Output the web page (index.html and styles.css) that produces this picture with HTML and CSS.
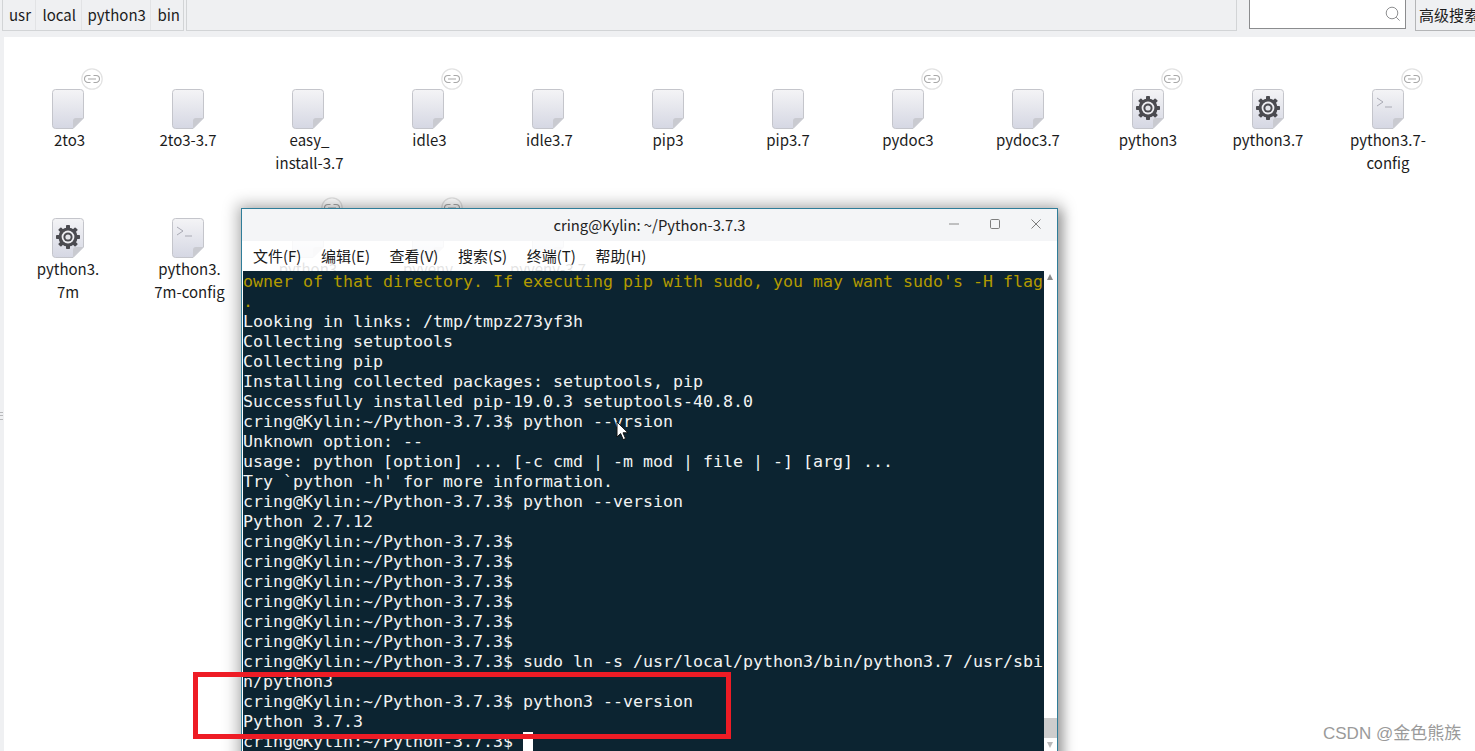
FILE: index.html
```html
<!DOCTYPE html>
<html lang="zh">
<head>
<meta charset="utf-8">
<title>Python-3.7.3</title>
<link rel="stylesheet" href="styles.css">
</head>
<body>
<svg class="defs" width="0" height="0" aria-hidden="true">
  <defs>
    <linearGradient id="paper" x1="0" y1="0" x2="0" y2="1">
      <stop offset="0" stop-color="#f4f4f6"/>
      <stop offset="1" stop-color="#d5d7e3"/>
    </linearGradient>
    <symbol id="file" viewBox="0 0 32 40">
      <path d="M3.5.5h25a3 3 0 0 1 3 3V29L21 39.5H3.5a3 3 0 0 1-3-3v-33a3 3 0 0 1 3-3z" fill="url(#paper)" stroke="#c4c5cb"/>
      <path d="M31.5 29H24a3 3 0 0 0-3 3v7.5z" fill="#c9cad0"/>
    </symbol>
    <symbol id="gear" viewBox="0 0 24 24">
      <g fill="#4b4b50">
        <rect x="10" y="0" width="4" height="24" rx=".8"/>
        <rect x="10" y="0" width="4" height="24" rx=".8" transform="rotate(45 12 12)"/>
        <rect x="10" y="0" width="4" height="24" rx=".8" transform="rotate(90 12 12)"/>
        <rect x="10" y="0" width="4" height="24" rx=".8" transform="rotate(135 12 12)"/>
        <circle cx="12" cy="12" r="9.6"/>
      </g>
      <circle cx="12" cy="12" r="6.4" fill="#eeeef2"/>
      <circle cx="12" cy="12" r="4.6" fill="#4b4b50"/>
      <circle cx="12" cy="12" r="2.6" fill="#e4e5ea"/>
    </symbol>
    <symbol id="prompt" viewBox="0 0 32 40">
      <path d="M5 9l6 4-6 4M13 18h7" fill="none" stroke="#a9aab4" stroke-width="1"/>
    </symbol>
    <symbol id="link" viewBox="0 0 22 22">
      <circle cx="11" cy="11" r="10.2" fill="#fff" stroke="#e2e2e2" stroke-width="1.2"/>
      <path d="M9.5 7.5H7a3.5 3.5 0 0 0 0 7h2.5M12.5 7.5H15a3.5 3.5 0 0 1 0 7h-2.5M7 11h8" fill="none" stroke="#a8a8a8" stroke-width="1.1"/>
    </symbol>
  </defs>
</svg>

<div class="app">
  <header class="toolbar">
    <nav class="crumbs">
      <span class="crumb">usr</span>
      <span class="crumb">local</span>
      <span class="crumb">python3</span>
      <span class="crumb">bin</span>
    </nav>
    <div class="pathfill"></div>
    <div class="search">
      <svg class="search-icon" viewBox="0 0 16 16"><circle cx="7" cy="7" r="5.8" fill="none" stroke="#8f9092" stroke-width="1"/><path d="M11.2 11.2L14.6 14.6" stroke="#8f9092" stroke-width="1"/></svg>
    </div>
    <div class="adv">高级搜索</div>
  </header>

  <main class="main">
    <span class="grip"></span>
    <section class="files">
      <div class="item"><span class="icon"><svg class="page"><use href="#file"/></svg><svg class="badge"><use href="#link"/></svg></span><span class="label nudge">2to3</span></div>
      <div class="item"><span class="icon"><svg class="page"><use href="#file"/></svg></span><span class="label">2to3-3.7</span></div>
      <div class="item"><span class="icon"><svg class="page"><use href="#file"/></svg></span><span class="label nudge">easy_<br>install-3.7</span></div>
      <div class="item"><span class="icon"><svg class="page"><use href="#file"/></svg><svg class="badge"><use href="#link"/></svg></span><span class="label nudge">idle3</span></div>
      <div class="item"><span class="icon"><svg class="page"><use href="#file"/></svg></span><span class="label nudge">idle3.7</span></div>
      <div class="item"><span class="icon"><svg class="page"><use href="#file"/></svg></span><span class="label">pip3</span></div>
      <div class="item"><span class="icon"><svg class="page"><use href="#file"/></svg></span><span class="label">pip3.7</span></div>
      <div class="item"><span class="icon"><svg class="page"><use href="#file"/></svg><svg class="badge"><use href="#link"/></svg></span><span class="label">pydoc3</span></div>
      <div class="item"><span class="icon"><svg class="page"><use href="#file"/></svg></span><span class="label">pydoc3.7</span></div>
      <div class="item"><span class="icon"><svg class="page"><use href="#file"/></svg><svg class="glyph"><use href="#gear"/></svg><svg class="badge"><use href="#link"/></svg></span><span class="label">python3</span></div>
      <div class="item"><span class="icon"><svg class="page"><use href="#file"/></svg><svg class="glyph"><use href="#gear"/></svg></span><span class="label">python3.7</span></div>
      <div class="item"><span class="icon"><svg class="page"><use href="#file"/></svg><svg class="page over"><use href="#prompt"/></svg><svg class="badge"><use href="#link"/></svg></span><span class="label">python3.7-<br>config</span></div>
      <div class="item"><span class="icon"><svg class="page"><use href="#file"/></svg><svg class="glyph"><use href="#gear"/></svg></span><span class="label">python3.<br>7m</span></div>
      <div class="item"><span class="icon"><svg class="page"><use href="#file"/></svg><svg class="page over"><use href="#prompt"/></svg></span><span class="label nudge">python3.<br>7m-config</span></div>
      <div class="item"><span class="icon"><svg class="page"><use href="#file"/></svg><svg class="badge"><use href="#link"/></svg></span><span class="label">python3</span></div>
      <div class="item"><span class="icon"><svg class="page"><use href="#file"/></svg><svg class="badge"><use href="#link"/></svg></span><span class="label">pyvenv</span></div>
      <div class="item"><span class="icon"><svg class="page"><use href="#file"/></svg></span><span class="label">pyvenv-3.7</span></div>
    </section>
  </main>
</div>

<div class="terminal">
  <div class="titlebar">
    <span class="title">cring@Kylin: ~/Python-3.7.3</span>
    <span class="winbtns">
      <svg class="winbtn" viewBox="0 0 12 12"><path d="M1 6h10" stroke="#8a8a8a" stroke-width="1"/></svg>
      <svg class="winbtn" viewBox="0 0 12 12"><rect x="1.5" y="1.5" width="9" height="9" rx="1.2" fill="none" stroke="#7e7e7e" stroke-width="1"/></svg>
      <svg class="winbtn" viewBox="0 0 12 12"><path d="M1.5 1.5l9 9M10.5 1.5l-9 9" stroke="#7e7e7e" stroke-width="1"/></svg>
    </span>
  </div>
  <div class="menubar">
    <span class="menu">文件(F)</span>
    <span class="menu">编辑(E)</span>
    <span class="menu">查看(V)</span>
    <span class="menu">搜索(S)</span>
    <span class="menu">终端(T)</span>
    <span class="menu">帮助(H)</span>
  </div>
  <div class="term-wrap">
    <pre class="screen"><span class="warn">owner of that directory. If executing pip with sudo, you may want sudo's -H flag
.</span>
Looking in links: /tmp/tmpz273yf3h
Collecting setuptools
Collecting pip
Installing collected packages: setuptools, pip
Successfully installed pip-19.0.3 setuptools-40.8.0
cring@Kylin:~/Python-3.7.3$ python --vrsion
Unknown option: --
usage: python [option] ... [-c cmd | -m mod | file | -] [arg] ...
Try `python -h' for more information.
cring@Kylin:~/Python-3.7.3$ python --version
Python 2.7.12
cring@Kylin:~/Python-3.7.3$
cring@Kylin:~/Python-3.7.3$
cring@Kylin:~/Python-3.7.3$
cring@Kylin:~/Python-3.7.3$
cring@Kylin:~/Python-3.7.3$
cring@Kylin:~/Python-3.7.3$
cring@Kylin:~/Python-3.7.3$ sudo ln -s /usr/local/python3/bin/python3.7 /usr/sbi
n/python3
cring@Kylin:~/Python-3.7.3$ python3 --version
Python 3.7.3
cring@Kylin:~/Python-3.7.3$ <span class="cursor"> </span></pre>
    <div class="scrollbar">
      <span class="arrow-up"></span>
      <span class="thumb"></span>
      <span class="arrow-down"></span>
    </div>
  </div>
</div>

<svg class="pointer" viewBox="0 0 12 20"><path d="M1 1v15l3.6-3.4 2.6 6 2.4-1-2.6-5.8H12z" fill="#fff" stroke="#111" stroke-width="1"/></svg>
<div class="annotation"></div>
<div class="watermark">CSDN @金色熊族</div>
</body>
</html>
```
FILE: styles.css
```css
* { box-sizing: border-box; }
html, body { margin: 0; height: 100%; overflow: hidden; background: #fff; }
body { font-family: "Noto Sans CJK SC", "Noto Sans", sans-serif; font-size: 15px; color: #1c1c1c; }
.defs { position: absolute; }
svg { display: block; }

.app { display: flex; flex-direction: column; height: 100vh; }

.toolbar { display: flex; align-items: flex-start; height: 37px; flex: none; background: #eff0f2; padding-left: 2px; overflow: hidden; }
.crumbs { display: flex; flex: none; width: 182px; height: 32px; margin-top: -1px; border: 1px solid #d2d4d6; border-top: 0; font-size: 15px; }
.crumb { display: flex; align-items: center; padding: 0 4.5px 0 6px; height: 31px; border-left: 1px solid #e2e3e5; }
.crumb:first-child { border-left: 0; }
.pathfill { flex: 1; height: 32px; margin-left: 2px; margin-top: -1px; border: 1px solid #d2d4d6; border-top: 0; }
.search { flex: none; width: 157px; height: 30px; margin-left: 12px; margin-top: -1px; background: #fff; border: 1px solid #8b8c8e; border-top: 0; display: flex; justify-content: flex-end; align-items: center; padding-right: 4px; }
.search-icon { width: 16px; height: 16px; }
.adv { flex: none; width: 60px; height: 32px; margin-left: 9px; margin-top: -1px; padding-left: 3px; border: 1px solid #b4b5b7; border-top: 0; border-right: 0; white-space: nowrap; overflow: hidden; line-height: 31px; }

.main { position: relative; flex: 1; background: #eff0f2; padding-left: 4px; min-height: 0; }
.grip { position: absolute; left: 0; top: 375px; width: 3px; height: 8px; border-top: 1px solid #b8b9bb; border-bottom: 1px solid #b8b9bb; }
.grip::after { content: ""; display: block; height: 1px; margin-top: 2px; background: #b8b9bb; }
.files { height: 100%; background: #fff; padding: 52px 0 0 4px; display: grid; grid-template-columns: repeat(12, 120px); grid-auto-rows: 129px; align-content: start; }
.item { display: flex; flex-direction: column; align-items: center; }
.icon { position: relative; width: 32px; height: 40px; flex: none; }
.page { width: 32px; height: 40px; }
.over { position: absolute; left: 0; top: 0; }
.glyph { position: absolute; left: 4px; top: 7px; width: 24px; height: 24px; }
.badge { position: absolute; left: 29px; top: -21px; width: 22px; height: 22px; }
.label { margin-top: -1px; line-height: 23px; text-align: center; white-space: nowrap; font-size: 15px; }
.nudge { padding-left: 3px; }

.terminal { position: absolute; left: 241px; top: 208px; width: 817px; height: 560px; border: 1px solid #2f7d99; box-shadow: 0 0 14px 4px rgba(0,0,0,.28), 5px 4px 10px rgba(0,0,0,.2); display: flex; flex-direction: column; }
.titlebar { position: relative; flex: none; height: 32px; background: #f4f5f7; display: flex; align-items: center; justify-content: center; font-size: 14.8px; color: #222; padding-bottom: 2px; }
.winbtns { position: absolute; right: 15px; top: 9px; display: flex; gap: 29px; }
.winbtn { width: 12px; height: 12px; }
.menubar { flex: none; height: 30px; background: rgba(255,255,255,.88); display: flex; gap: 19.6px; padding: 0 0 2px 11px; align-items: center; font-size: 15px; color: #1a1a1a; }
.menu { white-space: nowrap; }
.term-wrap { flex: 1; display: flex; min-height: 0; padding-left: 1px; background: #fff; }
.screen { flex: none; width: 801px; margin: 0; height: 100%; background: #0c2431; color: #f2f3f3; font-family: "DejaVu Sans Mono", monospace; font-size: 16.62px; line-height: 20px; padding-top: 1px; overflow: hidden; white-space: pre; }
.warn { color: #b39a00; }
.cursor { display: inline-block; width: 10px; height: 20px; background: #fff; vertical-align: top; }
.scrollbar { position: relative; flex: 1; background: #fff; }
.arrow-up, .arrow-down { position: absolute; left: 3px; width: 0; height: 0; border-left: 3.5px solid transparent; border-right: 3.5px solid transparent; }
.arrow-up { top: 3px; border-bottom: 6px solid #8b8b8b; }
.arrow-down { top: 471px; border-top: 6px solid #b9b9b9; }
.thumb { position: absolute; left: 0; right: 0; top: 447px; height: 20px; background: #cdcdcd; }

.pointer { position: absolute; left: 616px; top: 421px; width: 12px; height: 20px; }
.annotation { position: absolute; left: 193px; top: 672px; width: 538px; height: 67px; border: 5px solid #ee1c25; }
.watermark { position: absolute; left: 1323px; top: 722px; font-family: "Liberation Sans", "Noto Sans CJK SC", sans-serif; font-size: 17px; line-height: 24px; color: #9a9a9a; white-space: nowrap; }
```
